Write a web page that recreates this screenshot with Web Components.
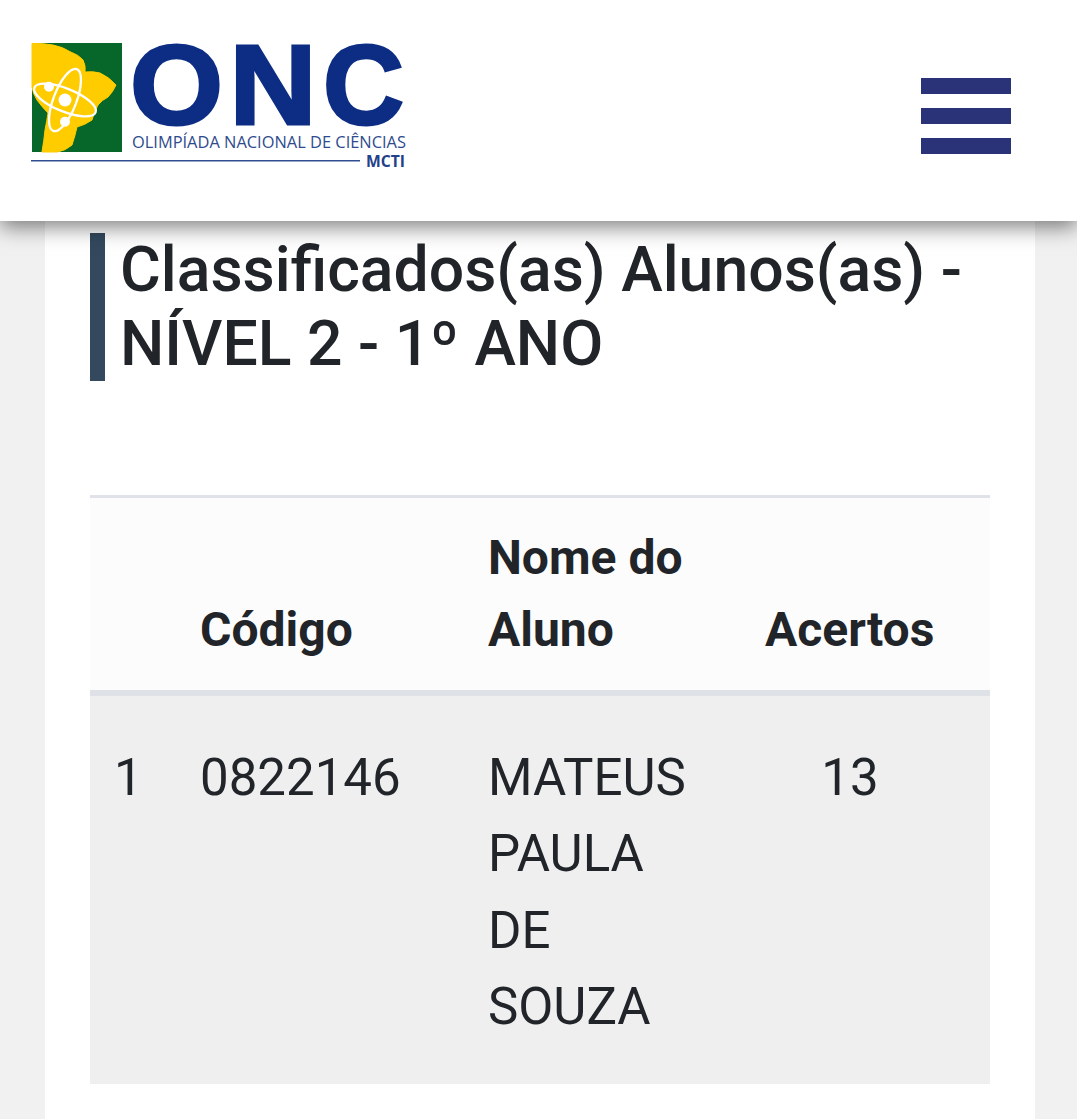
<!DOCTYPE html>
<html lang="pt-BR"><head><meta charset="utf-8"><title>ONC</title>
<style>
html,body{margin:0;height:1119px;overflow:hidden;background:#f1f1f1;font-family:Roboto,"Liberation Sans",sans-serif;color:#212529}
</style></head><body>
<onc-header><onc-logo></onc-logo><onc-menu></onc-menu></onc-header>
<onc-panel>
<onc-title>Classificados(as) Alunos(as) -<br>NÍVEL 2 - 1º ANO</onc-title>
<onc-table>
<onc-head></onc-head><onc-head>Código</onc-head><onc-head>Nome do<br>Aluno</onc-head><onc-head center>Acertos</onc-head>
<onc-cell>1</onc-cell><onc-cell>0822146</onc-cell><onc-cell>MATEUS<br>PAULA<br>DE<br>SOUZA</onc-cell><onc-cell center>13</onc-cell>
</onc-table>
</onc-panel>
<script>
function def(name,css,html){customElements.define(name,class extends HTMLElement{constructor(){super();this.attachShadow({mode:'open'}).innerHTML='<style>'+css+'</style>'+html}})}
def('onc-header',':host{display:flex;justify-content:space-between;height:221px;box-sizing:border-box;background:#fff;padding:40px 66px 0 31px;box-shadow:0 6px 20px rgba(0,0,0,.5);position:relative;z-index:2}','<slot></slot>');
def('onc-logo',':host{display:block;width:376px;height:130px}svg{display:block;overflow:visible}',`<svg width="376" height="130" viewBox="0 0 376 130">
<rect x="1" y="3" width="90" height="109" fill="#07672a"/>
<path fill="#ffcc00" stroke="#ffcc00" stroke-width="1" stroke-linejoin="round" d="M1 3.5 Q12 3 22 5 Q32 7 39 11.7 Q48 15 52 20 Q55 26 54 32 Q62 31 69 33 Q78 37 85 45 Q82 52 77 57 Q71 60 67 65 Q63 72 61 80 Q54 85 46 87 Q44 96 41 105 Q34 111 26 112 L11 112 Q13 100 14 90 Q16 80 17 73 Q11 67 6 60 Q2 54 1 47Z"/>
<g fill="none" stroke="#fff" stroke-width="2.3"><ellipse cx="34" cy="60" rx="33" ry="11.5" transform="rotate(22 34 60)"/><ellipse cx="34" cy="60" rx="33" ry="11.5" transform="rotate(-69 34 60)"/></g>
<g fill="#fff"><circle cx="34" cy="60" r="6.5"/><circle cx="18" cy="46.7" r="5"/><circle cx="34" cy="81.7" r="5"/></g>
<g fill="#0c2d83" font-family="'Liberation Sans',sans-serif" font-weight="700" stroke="#0c2d83" stroke-width="3" font-size="114">
<text x="99" y="84" textLength="93" lengthAdjust="spacingAndGlyphs">O</text>
<text x="198.5" y="83.5" textLength="87" lengthAdjust="spacingAndGlyphs">N</text>
<text x="292" y="84" textLength="81" lengthAdjust="spacingAndGlyphs">C</text></g>
<text x="101" y="108" font-family="'Open Sans',sans-serif" font-size="16.5" fill="#2f4b8e" textLength="274" lengthAdjust="spacingAndGlyphs">OLIMPÍADA NACIONAL DE CIÊNCIAS</text>
<rect x="0" y="120" width="329" height="1.5" fill="#2f4d91"/>
<text x="335" y="127" font-family="'Open Sans',sans-serif" font-weight="700" font-size="16" fill="#23408a" textLength="39" lengthAdjust="spacingAndGlyphs">MCTI</text>
</svg>`);
def('onc-menu',':host{display:flex;flex-direction:column;gap:14px;width:90px;margin-top:38px}i{display:block;height:16px;background:#2b3378}','<i></i><i></i><i></i>');
def('onc-panel',':host{display:block;margin:0 42px 0 45px;background:#fff;padding:12px 45px 0;height:898px;box-sizing:border-box}','<slot></slot>');
def('onc-title',':host{display:block;border-left:15px solid #34495e;padding-left:15px;font-size:62.5px;line-height:74px;font-weight:500;color:#212529;margin-bottom:114px;white-space:nowrap}','<slot></slot>');
def('onc-table',':host{display:grid;grid-template-columns:86px 288px 277px 218px 31px;border-top:3px solid #e0e2ea;}','<slot></slot>');
def('onc-head',':host{display:flex;align-items:flex-end;background:#fcfcfc;border-bottom:6px solid #dee2e6;padding:26px 0 24px 24px;font-size:48px;line-height:72px;font-weight:700;box-sizing:border-box;height:198px}:host([center]){grid-column:4/span 2}','<div><slot></slot></div>');
def('onc-cell',':host{display:block;background:#efeff0;padding:44px 0 39px 24px;font-size:51px;line-height:76.3px;font-weight:400}:host([center]){grid-column:4/span 2;padding-left:0;padding-right:31px;text-align:center}','<slot></slot>');
</script></body></html>
